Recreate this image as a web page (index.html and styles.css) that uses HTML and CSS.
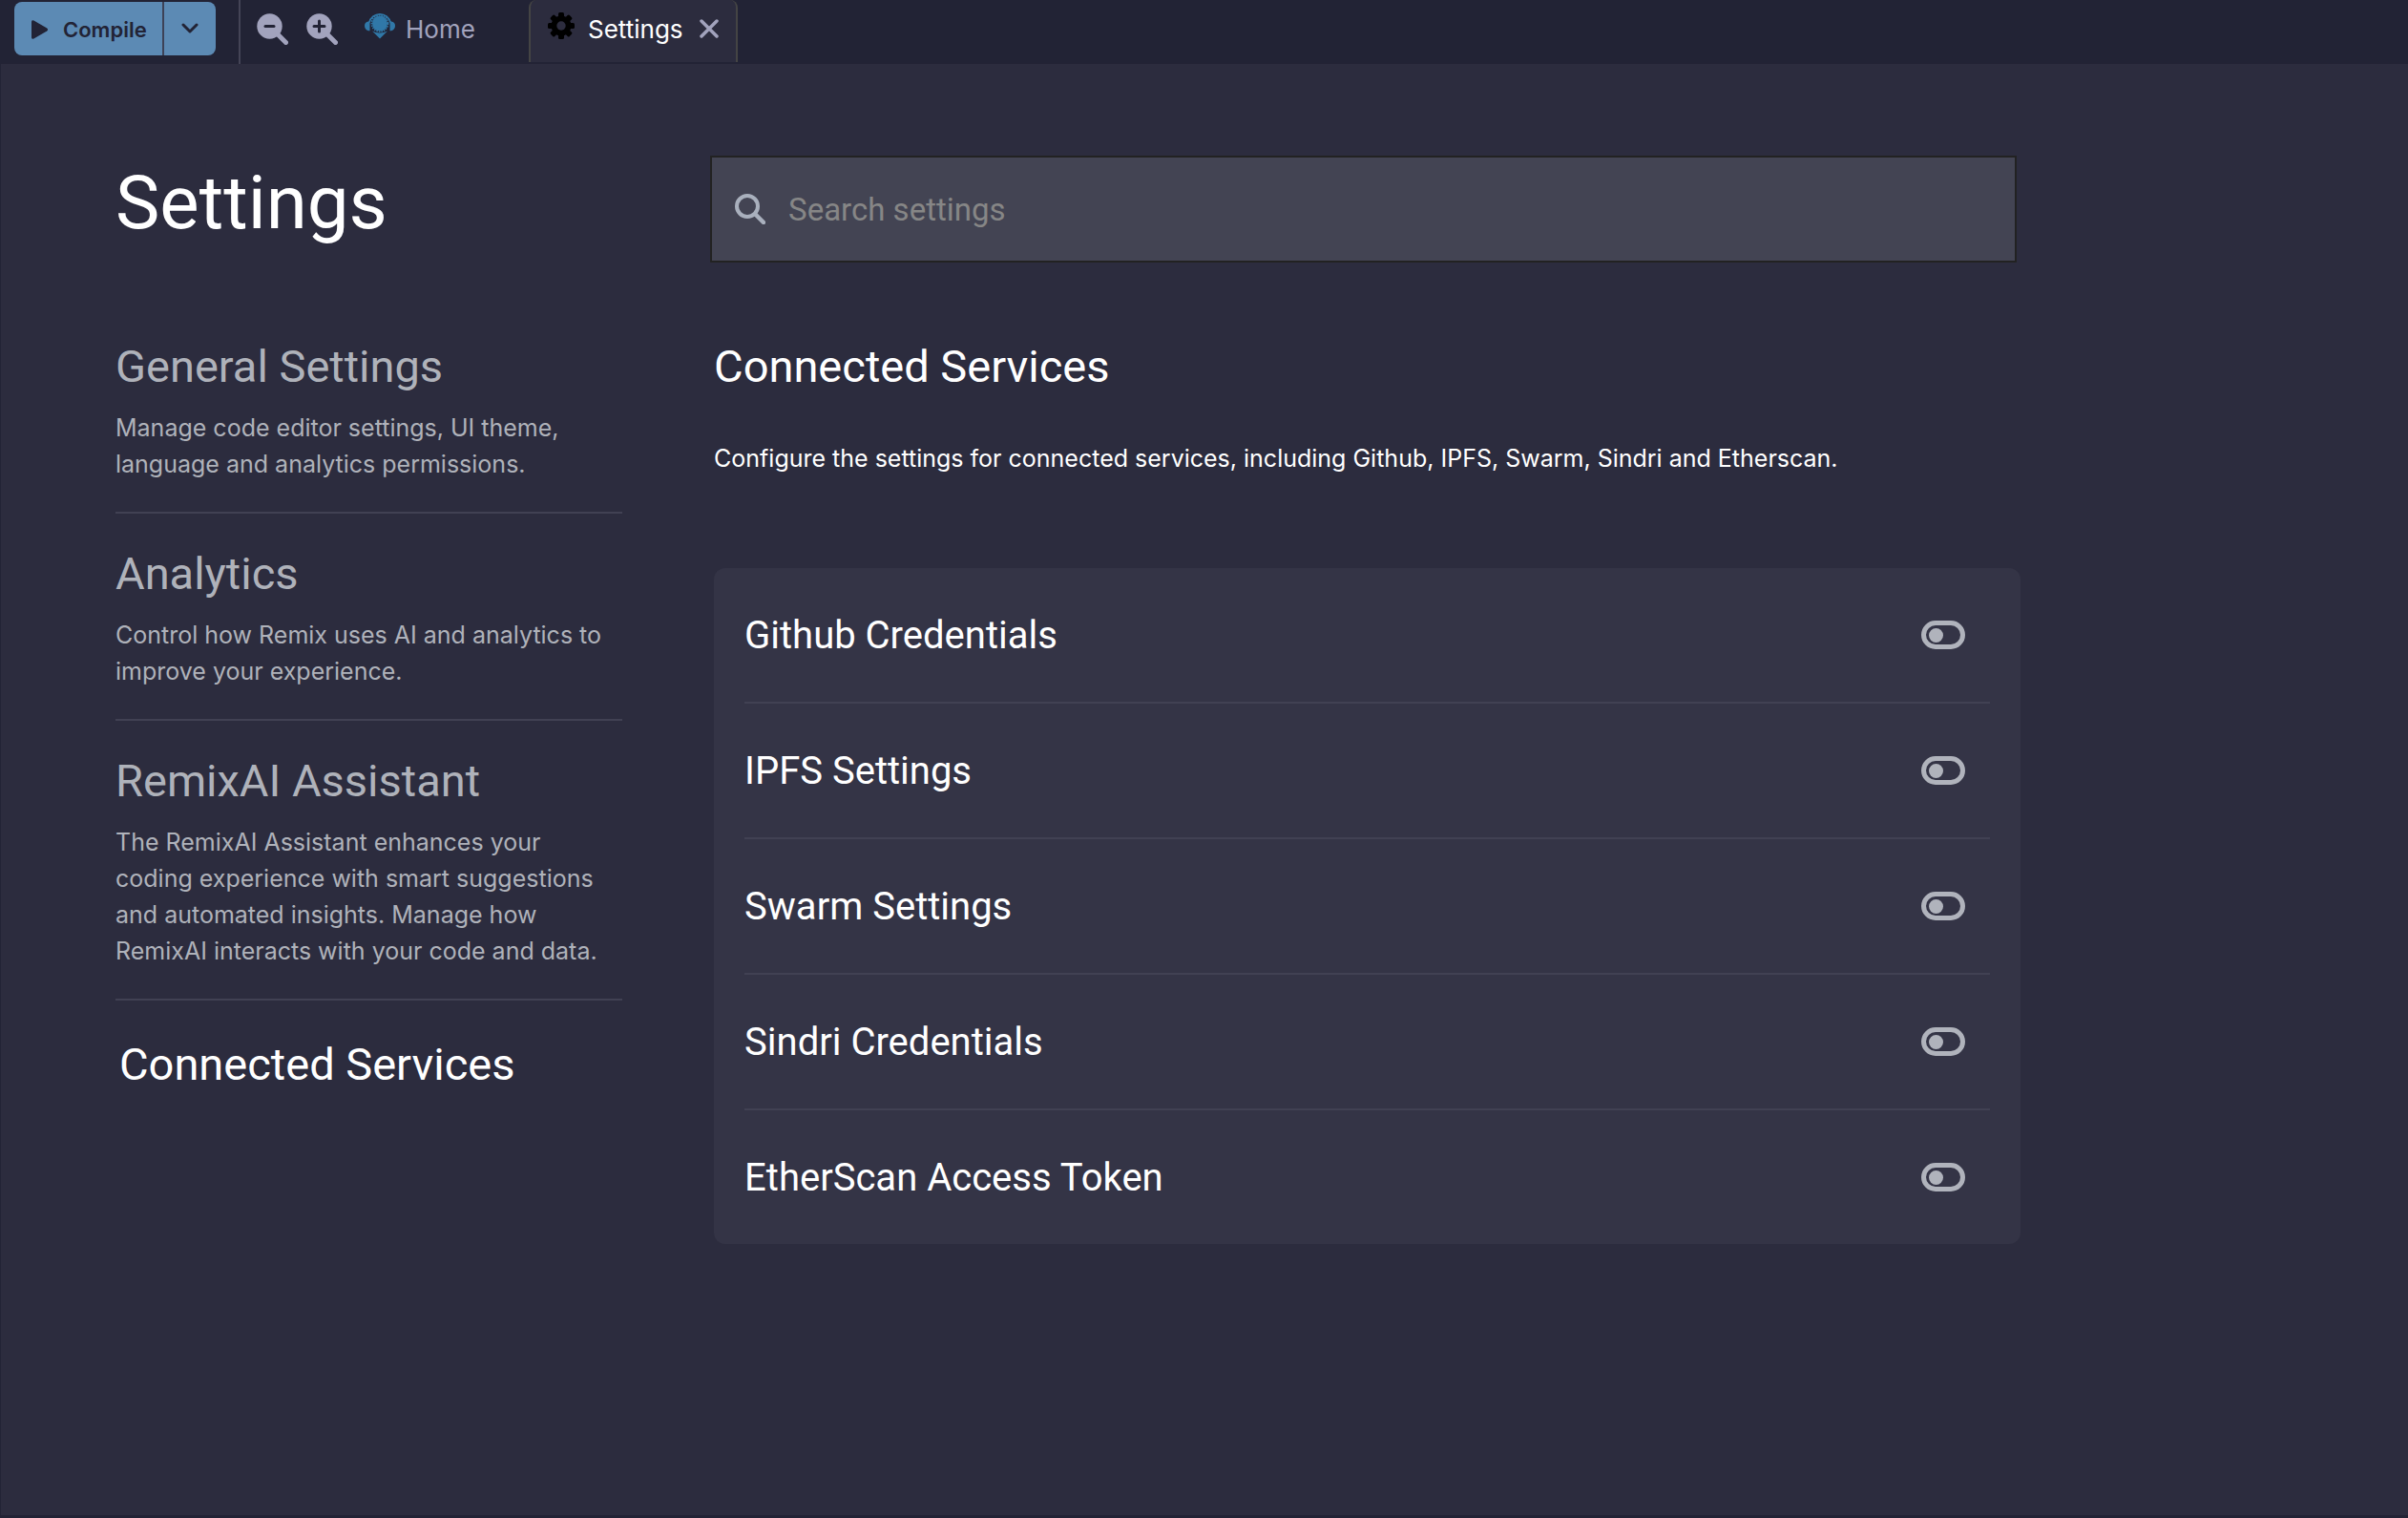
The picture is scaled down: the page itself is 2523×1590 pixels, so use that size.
FILE: index.html
```
<!DOCTYPE html>
<html lang="en">
<head>
    <meta charset="UTF-8">
    <meta name="viewport" content="width=device-width, initial-scale=1.0">
    <title>Remix - Settings</title>
    <link rel="stylesheet" href="styles.css">
</head>
<body>
    <header class="topbar">
        <div class="compile">
            <button class="compile-btn">
                <svg width="18" height="20" viewBox="0 0 18 20"><path d="M0 2Q0-.6 2.4.6L16.2 8.6Q18 10 16.2 11.4L2.4 19.4Q0 20.6 0 18z"/></svg>
                Compile
            </button>
            <button class="compile-more" aria-label="More compile options">
                <svg width="18" height="12" viewBox="0 0 18 12"><path d="M2 2l7 7 7-7" fill="none" stroke="currentColor" stroke-width="3" stroke-linecap="round" stroke-linejoin="round"/></svg>
            </button>
        </div>

        <div class="zoom">
            <button aria-label="Zoom out">
                <svg width="33" height="33" viewBox="0 0 33 33"><circle cx="13.5" cy="13.5" r="13.2"/><path d="M22 22l8.5 8.5" class="handle"/><path d="M9 13.5h9" class="sign"/></svg>
            </button>
            <button aria-label="Zoom in">
                <svg width="33" height="33" viewBox="0 0 33 33"><circle cx="13.5" cy="13.5" r="13.2"/><path d="M22 22l8.5 8.5" class="handle"/><path d="M8 13.5h11M13.5 8v11" class="sign"/></svg>
            </button>
        </div>

        <nav class="tabs">
            <div class="tab">
                <button class="tab-title">
                    <svg class="home-icon" width="32" height="28" viewBox="0 0 32 28">
                        <path d="M5 10.500A11.300 11.300 0 0 1 27 10.500" fill="none" stroke="currentColor" stroke-width="1.800"/>
                        <path d="M5.500 9.200v10H4Q0 18 0 14T4 9.400zM26.500 9.200v10H28Q32 18 32 14T28 9.400z"/>
                        <circle cx="16" cy="11.500" r="8"/>
                        <circle cx="16" cy="11.500" r="8.600" fill="none" stroke="currentColor" stroke-width="1.600" stroke-dasharray="1.600 1"/>
                        <path d="M8 19.500Q16 23.500 24 19.500L16 27.500z"/>
                    </svg>
                    Home
                </button>
            </div>
            <div class="tab active">
                <button class="tab-title">
                    <svg class="gear-icon" width="28" height="28" viewBox="0 0 28 28">
                        <rect x="11" y="0" width="6" height="28" rx="1.500"/>
                        <rect x="11" y="0" width="6" height="28" rx="1.500" transform="rotate(45 14 14)"/>
                        <rect x="11" y="0" width="6" height="28" rx="1.500" transform="rotate(90 14 14)"/>
                        <rect x="11" y="0" width="6" height="28" rx="1.500" transform="rotate(135 14 14)"/>
                        <circle cx="14" cy="14" r="10.500"/>
                        <circle cx="14" cy="14" r="4.700" class="hole"/>
                    </svg>
                    Settings
                </button>
                <button class="tab-close" aria-label="Close tab">
                    <svg width="20" height="20" viewBox="0 0 20 20"><path d="M2 2l16 16M18 2L2 18" stroke="currentColor" stroke-width="3.500" stroke-linecap="round"/></svg>
                </button>
            </div>
        </nav>
    </header>

    <main class="settings">
        <h1>Settings</h1>

        <label class="search">
            <svg width="32" height="32" viewBox="0 0 32 32"><circle cx="13" cy="13" r="11" fill="none" stroke="currentColor" stroke-width="4"/><path d="M21.500 21.500L30 30" stroke="currentColor" stroke-width="4.500" stroke-linecap="round"/></svg>
            <input type="text" placeholder="Search settings" aria-label="Search settings">
        </label>

        <nav class="menu">
            <a href="#general">
                <h3>General Settings</h3>
                <p>Manage code editor settings, UI theme,<br>language and analytics permissions.</p>
            </a>
            <a href="#analytics">
                <h3>Analytics</h3>
                <p>Control how Remix uses AI and analytics to<br>improve your experience.</p>
            </a>
            <a href="#ai">
                <h3>RemixAI Assistant</h3>
                <p>The RemixAI Assistant enhances your<br>coding experience with smart suggestions<br>and automated insights. Manage how<br>RemixAI interacts with your code and data.</p>
            </a>
            <a href="#services" class="selected">
                <h3>Connected Services</h3>
            </a>
        </nav>

        <section class="services" id="services">
            <h2>Connected Services</h2>
            <p>Configure the settings for connected services, including Github, IPFS, Swarm, Sindri and Etherscan.</p>
            <div class="card">
                <div class="row">
                    <label for="github">Github Credentials</label>
                    <input type="checkbox" id="github">
                </div>
                <div class="row">
                    <label for="ipfs">IPFS Settings</label>
                    <input type="checkbox" id="ipfs">
                </div>
                <div class="row">
                    <label for="swarm">Swarm Settings</label>
                    <input type="checkbox" id="swarm">
                </div>
                <div class="row">
                    <label for="sindri">Sindri Credentials</label>
                    <input type="checkbox" id="sindri">
                </div>
                <div class="row">
                    <label for="etherscan">EtherScan Access Token</label>
                    <input type="checkbox" id="etherscan">
                </div>
            </div>
        </section>
    </main>
</body>
</html>
```
FILE: styles.css
```
* { box-sizing: border-box; }
body { margin: 0; min-height: 100vh; display: flex; flex-direction: column; background: #2c2c3e; color: #fff; font-family: Inter, "Liberation Sans", sans-serif; font-size: 26px; }
h1, h2, h3, p { margin: 0; font-weight: 400; }
button { padding: 0; border: none; background: none; color: inherit; font: inherit; cursor: pointer; }
svg { display: block; flex: none; fill: currentColor; }

/* top bar */
.topbar { display: flex; height: 67px; padding-left: 15px; background: #222335; color: #a2a3bd; }
.compile { display: flex; height: 56px; margin: 2px 24px 0 0; border-radius: 8px; background: #5c8ab4; color: #222335; }
.compile-btn { display: flex; align-items: center; gap: 15px; width: 155px; padding: 2px 0 0 18px; font-size: 22px; font-weight: 600; }
.compile-more { display: flex; align-items: center; justify-content: center; width: 56px; border-left: 2px solid #3d4257; }
.zoom { display: flex; align-items: flex-start; gap: 19px; padding: 14px 0 0 17px; border-left: 2px solid #444456; }
.zoom .handle { stroke: currentColor; stroke-width: 5; stroke-linecap: round; }
.zoom .sign { stroke: #222335; stroke-width: 3; stroke-linecap: round; }
.tabs { display: flex; }
.tab { display: flex; width: 219px; height: 65px; padding-left: 18px; gap: 17px; border: 2px solid transparent; border-width: 0 2px; }
.tab.active { border-color: #444; border-radius: 8px 8px 0 0; background: #2c2c3e; color: #fff; }
.tabs .tab:first-child { width: 200px; padding-left: 26px; }
.tab-title { display: flex; align-items: center; gap: 14px; height: 60px; }
.tab-title svg { margin-bottom: 6px; }
.home-icon { color: #3078a8; }
.tab-title .home-icon { margin-right: -3px; }
.gear-icon { color: #000; }
.gear-icon .hole { fill: #2c2c3e; }
.tab-close { height: 60px; color: #a2a3bd; }

/* page */
.settings { flex: 1; display: grid; grid-template-columns: 53fr 137fr; grid-template-rows: auto 1fr; column-gap: 92px; padding: 96px 16.1% 0 120px; border-left: 1px solid #222335; border-bottom: 3px solid #222335; }
h1, h2, h3, .row, .search input { font-family: Roboto, "Liberation Sans", sans-serif; }
h1 { font-size: 78px; line-height: 100px; }
h2, h3 { font-size: 47px; line-height: 58px; }
.search { display: flex; align-items: center; height: 112px; margin-right: 4px; padding: 0 24px; gap: 24px; border: 2px solid #222; background: #434453; color: #a9b0bd; }
.search input { flex: 1; min-width: 0; padding: 0; border: none; outline: none; background: none; color: #fff; font-size: 33px; }
.search input::placeholder { color: #868686; opacity: 1; }

.menu { padding-top: 80px; font-size: 25px; }
.menu a { display: block; padding-bottom: 31px; margin-bottom: 34px; border-bottom: 2px solid #414153; color: #afb2ba; text-decoration: none; }
.menu h3 { margin-bottom: 16px; }
.menu p { line-height: 38px; white-space: nowrap; }
.menu .selected { padding: 4px; border: none; color: #fff; }

.services { margin-left: 4px; padding-top: 80px; }
.services p { margin: 48px 0 96px; font-size: 25px; line-height: 38px; }
.card { padding: 0 32px; border-radius: 12px; background: #343446; }
.row { display: flex; align-items: center; justify-content: space-between; padding-right: 26px; border-bottom: 2px solid #414153; font-size: 40px; line-height: 138px; }
.row:last-child { border-bottom: none; }
.row label { padding-top: 2px; }
.row input { appearance: none; display: flex; align-items: center; width: 46px; height: 30px; margin: 0; padding-left: 3px; border: 5px solid #b0b3bc; border-radius: 15px; }
.row input::before { content: ""; width: 15px; height: 15px; border-radius: 50%; background: #b0b3bc; }
.row input:checked { justify-content: flex-end; padding: 0 3px 0 0; }
```
